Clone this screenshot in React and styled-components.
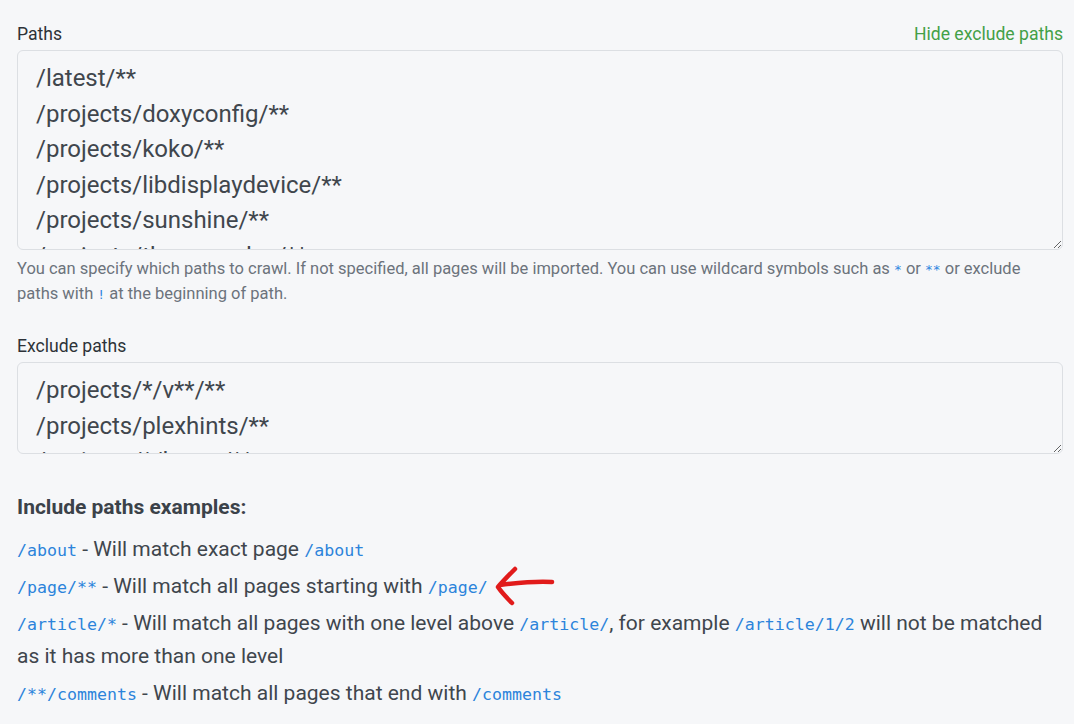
import React from "react";
import styled, { createGlobalStyle } from "styled-components";

const GlobalStyle = createGlobalStyle`
  html, body {
    margin: 0;
    padding: 0;
    background: #f6f7f9;
  }
  body {
    font-family: Roboto, "Noto Sans", sans-serif;
    color: #2f353b;
  }
`;

const Page = styled.div`
  padding: 22px 11px 20px 17px;
`;

const Field = styled.div`
  display: flex;
  flex-direction: column;
  margin-top: ${(p) => p.$top || "0"};
`;

const LabelRow = styled.div`
  display: flex;
  justify-content: space-between;
  align-items: center;
  height: 24px;
  margin-bottom: 4px;
`;

const Label = styled.label`
  font-size: 17.6px;
  color: #2d3238;
`;

const ToggleLink = styled.a`
  font-size: 17.6px;
  color: #43a047;
  cursor: pointer;
`;

const PathsArea = styled.textarea`
  box-sizing: border-box;
  width: 100%;
  height: ${(p) => p.$h}px;
  margin: 0;
  padding: 10px 18px;
  border: 1px solid #dcdfe3;
  border-radius: 6px;
  background: #f6f7f9;
  font-family: Roboto, "Noto Sans", sans-serif;
  font-size: 24px;
  line-height: 35.5px;
  color: #40464d;
  overflow: hidden;
  resize: vertical;
  outline: none;
`;

const Hint = styled.p`
  margin: 6px 0 0;
  font-size: 16.5px;
  line-height: 25px;
  color: #6c737c;
`;

const HintCode = styled.code`
  font-family: "DejaVu Sans Mono", monospace;
  font-size: 13px;
  line-height: 1;
  color: #2f86e0;
`;

const Examples = styled.section`
  margin-top: 40px;
`;

const Heading = styled.h4`
  margin: 0 0 13px;
  font-size: 21px;
  font-weight: 700;
  line-height: 26px;
  color: #3b4249;
`;

const Example = styled.p`
  margin: 0 0 4px;
  font-size: 21px;
  line-height: 33px;
  color: #3f464d;
`;

const Code = styled.code`
  font-family: "DejaVu Sans Mono", monospace;
  font-size: 16.6px;
  line-height: 1;
  color: #2c84db;
`;

const Marker = styled.svg`
  display: inline-block;
  vertical-align: middle;
  margin-left: 6px;
  margin-top: -6px;
  margin-bottom: -4px;
`;

const ArrowMark = () => (
  <Marker width="62" height="40" viewBox="0 0 62 40">
    <path
      d="M58 16 C46 15 30 16 6 19 M21 3 C15 9 9 15 4 21 C8 27 13 32 18 37"
      fill="none"
      stroke="#e11b1b"
      strokeWidth="4.5"
      strokeLinecap="round"
      strokeLinejoin="round"
    />
  </Marker>
);

const includePaths = [
  "/latest/**",
  "/projects/doxyconfig/**",
  "/projects/koko/**",
  "/projects/libdisplaydevice/**",
  "/projects/sunshine/**",
  "/projects/themerr-plex/**",
  "/projects/retroarcher/**",
].join("\n");

const excludePaths = [
  "/projects/*/v**/**",
  "/projects/plexhints/**",
  "/projects/*/latest/**",
].join("\n");

export default function App() {
  return (
    <>
      <GlobalStyle />
      <Page>
        <Field>
          <LabelRow>
            <Label>Paths</Label>
            <ToggleLink>Hide exclude paths</ToggleLink>
          </LabelRow>
          <PathsArea $h={200} defaultValue={includePaths} spellCheck={false} />
          <Hint>
            You can specify which paths to crawl. If not specified, all pages
            will be imported. You can use wildcard symbols such as{" "}
            <HintCode>*</HintCode> or <HintCode>**</HintCode> or exclude paths
            with <HintCode>!</HintCode> at the beginning of path.
          </Hint>
        </Field>

        <Field $top="28px">
          <LabelRow>
            <Label>Exclude paths</Label>
          </LabelRow>
          <PathsArea $h={92} defaultValue={excludePaths} spellCheck={false} />
        </Field>

        <Examples>
          <Heading>Include paths examples:</Heading>
          <Example>
            <Code>/about</Code> - Will match exact page <Code>/about</Code>
          </Example>
          <Example>
            <Code>/page/**</Code> - Will match all pages starting with{" "}
            <Code>/page/</Code>
            <ArrowMark />
          </Example>
          <Example>
            <Code>/article/*</Code> - Will match all pages with one level above{" "}
            <Code>/article/</Code>, for example <Code>/article/1/2</Code> will
            not be matched as it has more than one level
          </Example>
          <Example>
            <Code>/**/comments</Code> - Will match all pages that end with{" "}
            <Code>/comments</Code>
          </Example>
        </Examples>
      </Page>
    </>
  );
}
